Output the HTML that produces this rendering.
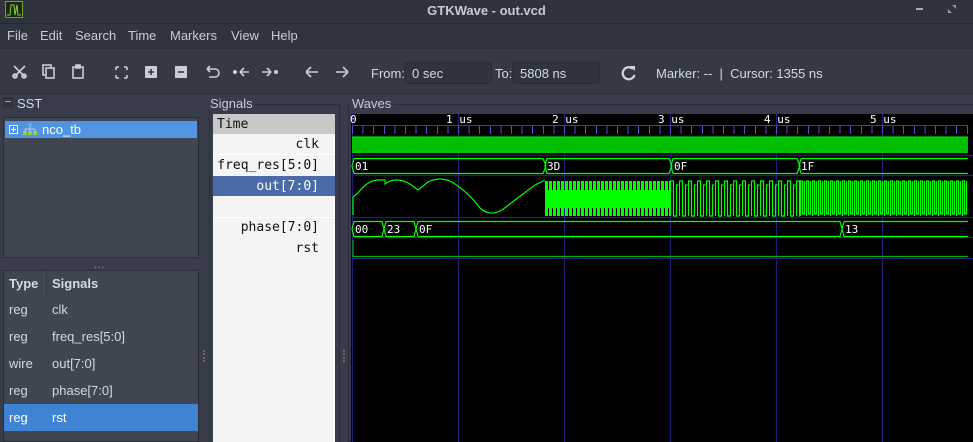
<!DOCTYPE html>
<html><head><meta charset="utf-8"><style>
*{margin:0;padding:0;box-sizing:border-box}
body{width:973px;height:442px;overflow:hidden;background:#383c4a;font-family:"Liberation Sans","DejaVu Sans",sans-serif;color:#d3dae3;font-size:13px;position:relative}
.abs{position:absolute}
.mono{font-family:"DejaVu Sans Mono","Liberation Mono",monospace}
</style></head><body>
<div class="abs" style="left:0;top:0;width:973px;height:23px;background:#2f333e"></div>
<div class="abs" style="left:5px;top:1px;width:18px;height:17px;border:1px solid #7a9a30;background:#1a2a10"></div>
<svg class="abs" style="left:6px;top:2px" width="16" height="15"><path d="M1 13 L4 13 L5 3 L8 3 L9 13 L11 3 L12 13 L15 13" stroke="#8cd040" fill="none" stroke-width="1"/></svg>
<div class="abs" style="left:0;top:3px;width:973px;text-align:center;font-weight:bold;font-size:13px;color:#c5cad3">GTKWave - out.vcd</div>
<div class="abs" style="left:916px;top:8px;width:7px;height:2px;background:#aab"></div>
<svg class="abs" style="left:948px;top:5px" width="8" height="8"><path d="M0 8 L0 4 L4 8Z M8 0 L8 4 L4 0Z" fill="#999"/></svg>
<div class="abs" style="left:0;top:23px;width:973px;height:25px;background:#2f343f;border-top:1px solid #262932"></div>
<div class="abs" style="left:7px;top:28px;font-size:13px;color:#c7ccd4">
<span class="abs" style="left:0">File</span><span class="abs" style="left:33px">Edit</span><span class="abs" style="left:68px">Search</span><span class="abs" style="left:121px">Time</span><span class="abs" style="left:163px">Markers</span><span class="abs" style="left:224px">View</span><span class="abs" style="left:264px">Help</span></div>
<div class="abs" style="left:0;top:48px;width:973px;height:45px;background:#353945;border-top:1px solid #2b2e38"></div>
<svg class="abs" style="left:0;top:48px" width="360" height="45" fill="none" stroke="#c9ced6" stroke-width="1.6">
<path d="M14 18 L25 29 M25 18 L14 29"/><circle cx="15" cy="28" r="2"/><circle cx="24" cy="28" r="2"/>
<rect x="43" y="17" width="8" height="10"/><rect x="46" y="20" width="8" height="10" fill="#353945"/>
<rect x="73" y="19" width="10" height="11"/><rect x="76" y="17" width="4" height="3" fill="#c9ced6"/>
<path d="M116 19h3M116 19v3M127 19h-3M127 19v3M116 30h3M116 30v-3M127 30h-3M127 30v-3"/>
<rect x="145" y="18" width="12" height="12" fill="#c9ced6" stroke="none"/><path d="M151 21v6M148 24h6" stroke="#353945"/>
<rect x="175" y="18" width="12" height="12" fill="#c9ced6" stroke="none"/><path d="M178 24h6" stroke="#353945"/>
<path d="M207 21h8a4 4 0 0 1 0 8h-6M207 21l3-3M207 21l3 3"/>
<circle cx="235" cy="24" r="1.2" fill="#c9ced6"/><path d="M240 24h9M240 24l4-4M240 24l4 4"/>
<path d="M262 24h9M271 24l-4-4M271 24l-4 4"/><circle cx="276" cy="24" r="1.2" fill="#c9ced6"/>
<path d="M306 24h12M306 24l5-5M306 24l5 5"/>
<path d="M336 24h12M348 24l-5-5M348 24l-5 5"/>
</svg>
<div class="abs" style="left:371px;top:66px">From:</div>
<div class="abs" style="left:404px;top:62px;width:88px;height:22px;background:#2f333d;border:1px solid #2a2d36;border-radius:3px;padding:3px 7px">0 sec</div>
<div class="abs" style="left:495px;top:66px">To:</div>
<div class="abs" style="left:512px;top:62px;width:88px;height:22px;background:#2f333d;border:1px solid #2a2d36;border-radius:3px;padding:3px 7px">5808 ns</div>
<svg class="abs" style="left:620px;top:64px" width="18" height="18"><path d="M13 5 A6 6 0 1 0 14.5 11" stroke="#d0d4dc" stroke-width="2.2" fill="none"/><path d="M10 2 L15 2 L15 7Z" fill="#d0d4dc"/></svg>
<div class="abs" style="left:656px;top:66px">Marker: --&nbsp;&nbsp;|&nbsp;&nbsp;Cursor: 1355 ns</div>
<div class="abs" style="left:0;top:93px;width:973px;height:349px;background:#383c4a;border-top:1px solid #2b2e38"></div>
<div class="abs" style="left:3px;top:97px;width:10px;height:11px;background:#2f333d;border-radius:2px"></div>
<div class="abs" style="left:5px;top:101px;width:6px;height:1px;background:#aab"></div>
<div class="abs" style="left:17px;top:96px">SST</div>
<div class="abs" style="left:3px;top:117px;width:196px;height:141px;background:#404552;border:1px solid #2b2e38"></div>
<div class="abs" style="left:5px;top:121px;width:192px;height:17px;background:#5294e2"></div>
<div class="abs" style="left:9px;top:125px;width:9px;height:9px;border:1px solid #eee"></div>
<div class="abs" style="left:11px;top:129px;width:5px;height:1px;background:#fff"></div>
<div class="abs" style="left:13px;top:127px;width:1px;height:5px;background:#fff"></div>
<svg class="abs" style="left:22px;top:122px" width="16" height="14"><rect x="6" y="1" width="4" height="3" fill="#5ab0e8"/><path d="M8 4v3M3 7h10M3 7v2M8 7v2M13 7v2" stroke="#ccc"/><rect x="1" y="9" width="4" height="4" fill="#8dd050"/><rect x="6" y="9" width="4" height="4" fill="#8dd050"/><rect x="11" y="9" width="4" height="4" fill="#8dd050"/></svg>
<div class="abs" style="left:42px;top:122px;color:#fff">nco_tb</div>
<div class="abs" style="left:94px;top:263px;color:#666;font-size:8px;letter-spacing:1px">•••</div>
<div class="abs" style="left:3px;top:270px;width:196px;height:172px;background:#404552;border:1px solid #2b2e38"></div>
<div class="abs" style="left:46px;top:271px;width:1px;height:25px;background:#353945"></div>
<div class="abs" style="left:9px;top:276px;font-weight:bold">Type</div>
<div class="abs" style="left:52px;top:276px;font-weight:bold">Signals</div>
<div class="abs" style="left:4px;top:404px;width:194px;height:27px;background:#3e83d4"></div>
<div class="abs" style="left:9px;top:296px;line-height:27px">reg<br>reg<br>wire<br>reg<br><span style="color:#fff">reg</span></div>
<div class="abs" style="left:52px;top:296px;line-height:27px">clk<br>freq_res[5:0]<br>out[7:0]<br>phase[7:0]<br><span style="color:#fff">rst</span></div>
<div class="abs" style="left:203px;top:350px;width:2px;height:12px;border-left:2px dotted #666"></div>
<div class="abs" style="left:209px;top:104px;width:131px;height:338px;border:1px solid #2b2e38;border-bottom:none"></div>
<div class="abs" style="left:208px;top:96px;color:#c5cad3;background:#383c4a;padding:0 2px">Signals</div>
<div class="abs" style="left:213px;top:114px;width:122px;height:328px;background:#f4f4f4"></div>
<div class="abs" style="left:213px;top:114px;width:122px;height:20px;background:#c8c8c8"></div>
<div class="abs mono" style="left:217px;top:117px;color:#111;font-size:13px">Time</div>
<div class="abs" style="left:213px;top:176px;width:122px;height:20px;background:#4a6aa8"></div>
<div class="abs" style="left:213px;top:154px;width:122px;height:1px;background:#fff"></div>
<div class="abs" style="left:213px;top:217px;width:122px;height:1px;background:#fff"></div>
<div class="abs mono" style="left:213px;top:135px;width:106px;text-align:right;color:#111;font-size:13px;line-height:20.8px;white-space:pre">clk
freq_res[5:0]
<span style="color:#fff">out[7:0]</span>

phase[7:0]
rst</div>
<div class="abs" style="left:343px;top:350px;width:2px;height:12px;border-left:2px dotted #666"></div>
<div class="abs" style="left:348px;top:104px;width:625px;height:338px;border:1px solid #2b2e38;border-right:none"></div>
<div class="abs" style="left:350px;top:96px;color:#c5cad3;background:#383c4a;padding:0 2px">Waves</div>
<svg class="abs" style="left:0;top:0" width="973" height="442">
<defs>
<pattern id="p1" x="670" y="0" width="9" height="442" patternUnits="userSpaceOnUse"><path d="M0.5 216V181H3.5V216H6.5V185H8.5" stroke="#00ff00" fill="none" stroke-width="1.2"/></pattern>
<pattern id="p2" x="800" y="0" width="6" height="442" patternUnits="userSpaceOnUse"><path d="M0.5 216V181H2.5V214H4.5V181" stroke="#00ff00" fill="none" stroke-width="1.3"/></pattern>
<pattern id="p3" x="545" y="0" width="4" height="442" patternUnits="userSpaceOnUse"><rect x="0" y="181" width="3" height="35" fill="#00ff00"/><rect x="3" y="190" width="1" height="18" fill="#00ff00"/></pattern>
</defs>
<rect x="351" y="114" width="622" height="328" fill="#000"/>
<g stroke="#1e1e78" stroke-width="1.2">
<path d="M352.5 114V442M458.5 114V442M564.5 114V442M670.5 114V442M776.5 114V442M882.5 114V442"/>
<path d="M352 155.5H973M352 175.5H973M352 217.5H973M352 237.5H973M352 258.5H973"/>
</g>
<path d="M352 125.5H968" stroke="#3a3ac0"/>
<g font-family="DejaVu Sans Mono,Liberation Mono,monospace" font-size="11" fill="#fff">
<text x="446" y="123">1 us</text><text x="552" y="123">2 us</text><text x="658" y="123">3 us</text><text x="764" y="123">4 us</text><text x="870" y="123">5 us</text><text x="350" y="123">0</text>
</g>
<rect x="352" y="137" width="616" height="16" fill="#00c000"/>
<path d="M352 137H968" stroke="#00ff00"/>
<g stroke="#00ff00" fill="none" stroke-width="1.2">
<path d="M354 158.5H543L546 166L543 173.5H354L352 166Z"/>
<path d="M547 158.5H669L672 166L669 173.5H547L545 166Z"/>
<path d="M673 158.5H797L800 166L797 173.5H673L671 166Z"/>
<path d="M801 158.5H968M801 173.5H968M801 158.5L799 166L801 173.5"/>
<path d="M354 221.5H382L384 229L382 236.5H354L352 229Z"/>
<path d="M386 221.5H414L416 229L414 236.5H386L384 229Z"/>
<path d="M418 221.5H840L842 229L840 236.5H418L416 229Z"/>
<path d="M844 221.5H968M844 236.5H968M844 221.5L842 229L844 236.5"/>
<path d="M353 240V256.5H968" stroke="#00b000"/>
<path d="M353 215V197L358 193Q368 180 378 180L385 180L385 184L390 181Q400 178 410 184L418 190L428 182Q440 176 452 182Q468 192 480 208Q490 217 502 210Q520 196 535 185L545 180"/>
</g>
<rect x="545" y="180" width="125" height="37" fill="url(#p3)"/>
<rect x="670" y="178" width="130" height="40" fill="url(#p1)"/>
<rect x="800" y="178" width="168" height="40" fill="url(#p2)"/>
<g font-family="DejaVu Sans Mono,Liberation Mono,monospace" font-size="11" fill="#fff">
<text x="355" y="170">01</text><text x="547" y="170">3D</text><text x="674" y="170">0F</text><text x="801" y="170">1F</text>
<text x="355" y="233">00</text><text x="387" y="233">23</text><text x="419" y="233">0F</text><text x="845" y="233">13</text>
</g>
</svg>
<div class="abs" style="left:352px;top:126px;width:616px;height:8px;background:repeating-linear-gradient(90deg,#5050d0 0 1px,transparent 1px 10.6px)"></div>
</body></html>
